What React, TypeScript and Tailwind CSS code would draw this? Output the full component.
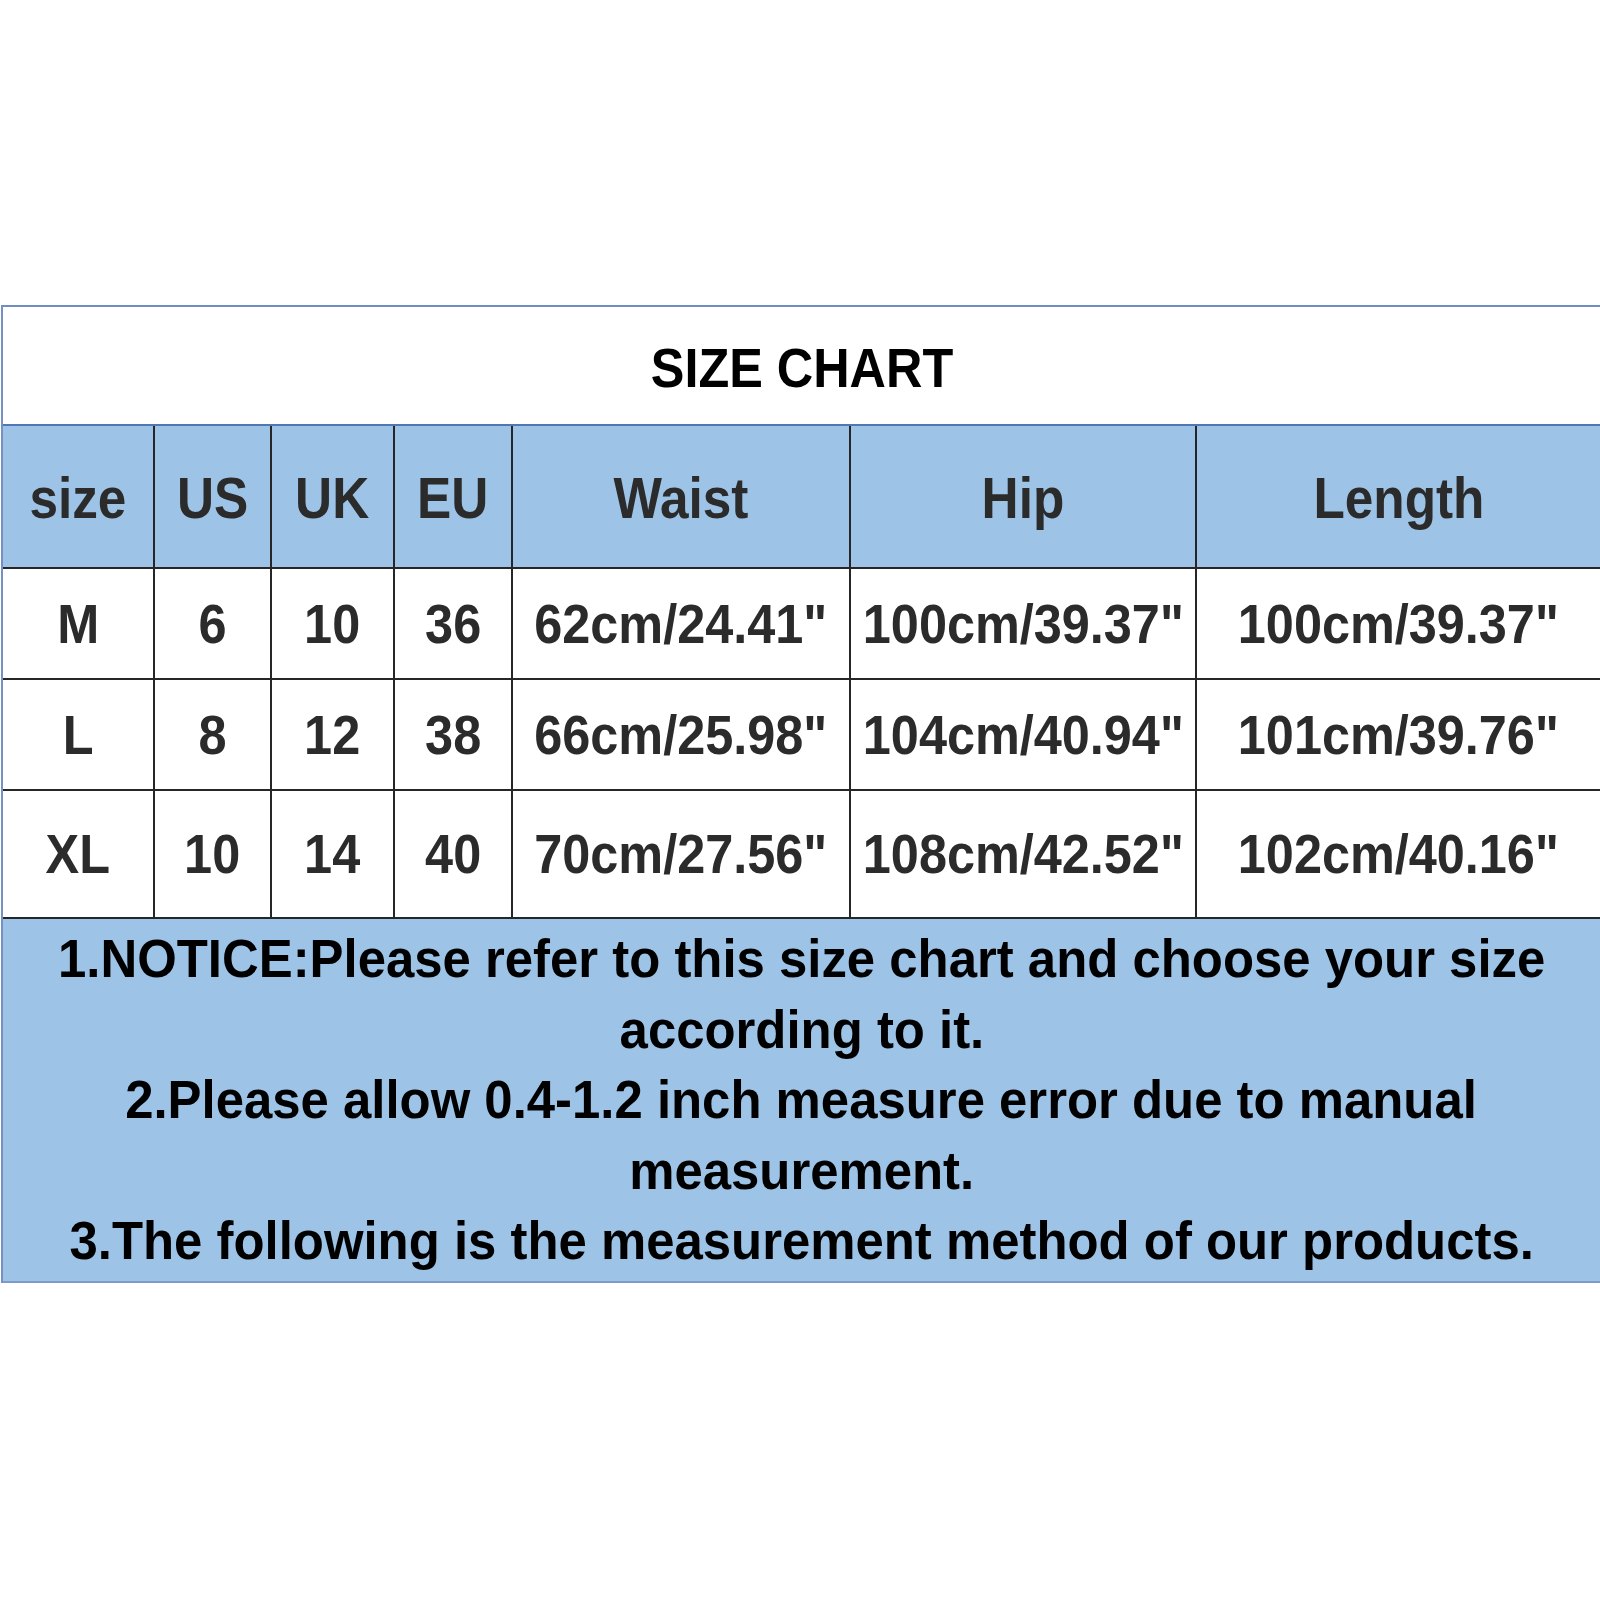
import React from "react"

const cols = ["size", "US", "UK", "EU", "Waist", "Hip", "Length"]

const rows = [
  ["M", "6", "10", "36", "62cm/24.41\"", "100cm/39.37\"", "100cm/39.37\""],
  ["L", "8", "12", "38", "66cm/25.98\"", "104cm/40.94\"", "101cm/39.76\""],
  ["XL", "10", "14", "40", "70cm/27.56\"", "108cm/42.52\"", "102cm/40.16\""],
]

const rowHeights = ["h-[111px]", "h-[111px]", "h-[128px]"]

const notes = [
  "1.NOTICE:Please refer to this size chart and choose your size",
  "according to it.",
  "2.Please allow 0.4-1.2 inch measure error due to manual",
  "measurement.",
  "3.The following is the measurement method of our products.",
]

const gridCols = "grid grid-cols-[150px_117px_123px_118px_338px_346px_1fr]"

const Cell = ({ text, first, pad = "" }: { text: string; first: boolean; pad?: string }) => (
  <div
    className={
      "flex items-center justify-center overflow-visible whitespace-nowrap " +
      pad +
      " " +
      (first ? "" : "border-l-2 border-[#262626]")
    }
  >
    <span className="inline-block scale-x-90">{text}</span>
  </div>
)

export default function App() {
  return (
    <div
      className="bg-white w-[1600px] h-[1600px] pt-[305px]"
      style={{ fontFamily: '"Liberation Sans", Arial, sans-serif' }}
    >
      <div className="ml-px border-l-2 border-[#7590c2]">
        {/* title */}
        <div className="h-[119px] border-t-2 border-[#6f8cc4] flex items-center justify-center pt-1">
          <span className="inline-block scale-x-90 text-[56px] font-bold text-black leading-none">
            SIZE CHART
          </span>
        </div>

        {/* header */}
        <div
          className={
            gridCols +
            " h-[143px] bg-[#9dc3e6] border-t-2 border-[#4f77b8] text-[57px] font-bold text-[#2b2b2b]"
          }
        >
          {cols.map((c, i) => (
            <Cell key={c} text={c} first={i === 0} pad="pt-1" />
          ))}
        </div>

        {/* data */}
        {rows.map((r, ri) => (
          <div
            key={r[0]}
            className={
              gridCols +
              " " +
              rowHeights[ri] +
              " border-t-2 border-[#262626] text-[56px] font-bold text-[#2b2b2b]"
            }
          >
            {r.map((v, i) => (
              <Cell key={i} text={v} first={i === 0} />
            ))}
          </div>
        ))}

        {/* notice */}
        <div className="h-[366px] bg-[#9dc3e6] border-t-2 border-[#262626] border-b-2 border-b-[#7d9bc8] flex flex-col items-center justify-center text-[53px] font-bold text-black">
          {notes.map((n) => (
            <div key={n} className="h-[70.5px] flex items-center whitespace-nowrap">
              <span className="inline-block scale-x-[0.96]">{n}</span>
            </div>
          ))}
        </div>
      </div>
    </div>
  )
}
